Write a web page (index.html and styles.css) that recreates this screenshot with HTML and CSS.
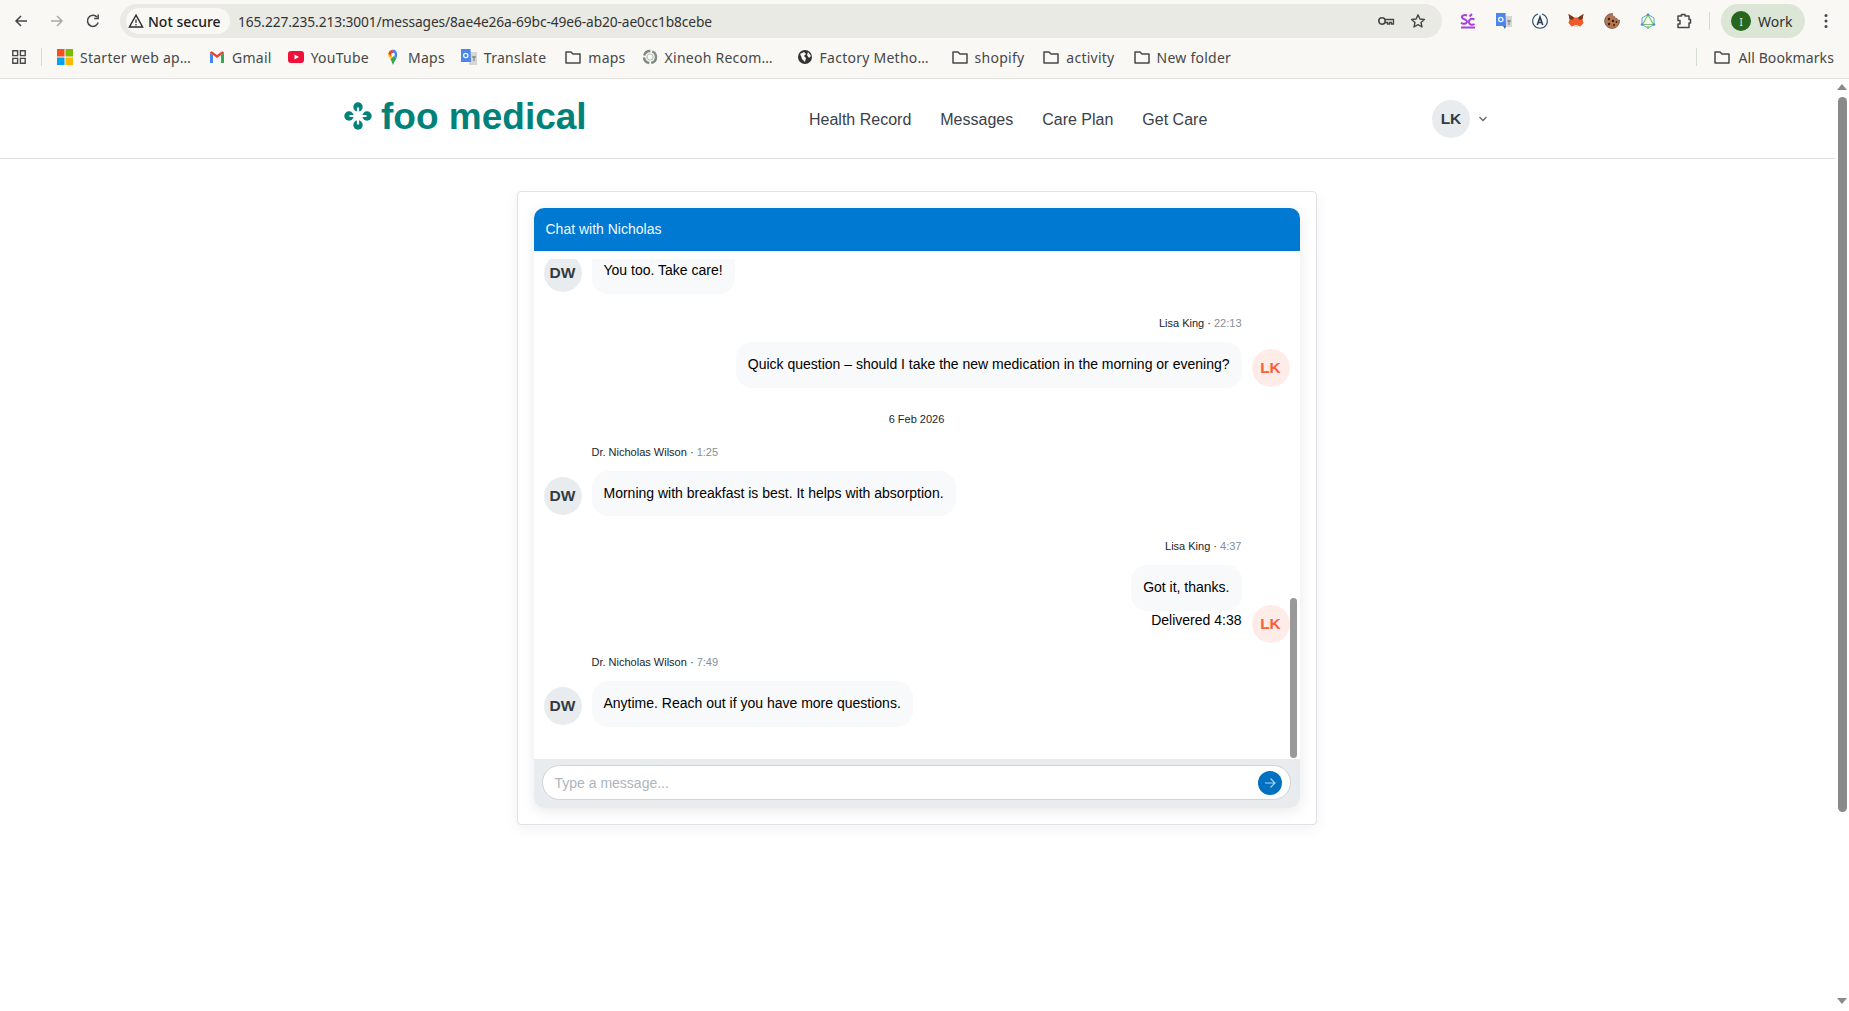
FILE: index.html
```html
<!DOCTYPE html>
<html lang="en">
<head>
<meta charset="utf-8">
<title>foo medical</title>
<link rel="stylesheet" href="styles.css">
</head>
<body>
<div class="browser">
  <div class="toolbar">
    <div class="nav-btns">
      <svg class="ico" viewBox="0 0 16 16"><path d="M14 8H3M8 3L3 8l5 5" fill="none" stroke="#474747" stroke-width="1.5"/></svg>
      <svg class="ico" viewBox="0 0 16 16"><path d="M2 8h11M8 3l5 5-5 5" fill="none" stroke="#a9a9a6" stroke-width="1.5"/></svg>
      <svg class="ico" viewBox="0 0 16 16"><path d="M13.2 9.6A5.5 5.5 0 1 1 12 4.1M13.2 1.5v4h-4" fill="none" stroke="#474747" stroke-width="1.5"/></svg>
    </div>
    <div class="omnibox">
      <div class="chip">
        <svg class="chip-ico" viewBox="0 0 16 16"><path d="M8 2.2L14.6 14H1.4z" fill="none" stroke="#2a2a2a" stroke-width="1.4"/><path d="M8 6.5v3.6M8 11v1.4" stroke="#2a2a2a" stroke-width="1.2"/></svg>
        <span>Not secure</span>
      </div>
      <span class="url">165.227.235.213:3001/messages/8ae4e26a-69bc-49e6-ab20-ae0cc1b8cebe</span>
      <svg class="omni-ico key" viewBox="0 0 18 16"><circle cx="5" cy="8" r="3.2" fill="none" stroke="#474747" stroke-width="1.6"/><path d="M8 6.500h8.500v4.500h-2V9.500h-2V11h-2V9.500H8" fill="none" stroke="#474747" stroke-width="1.300"/></svg>
      <svg class="omni-ico star" viewBox="0 0 16 16"><path d="M8 1.800l1.900 4.200 4.500.5-3.400 3 1 4.500L8 11.700 4 14l1-4.500-3.400-3 4.500-.5z" fill="none" stroke="#474747" stroke-width="1.400" stroke-linejoin="round"/></svg>
    </div>
    <div class="exts">
      <svg class="ext" viewBox="0 0 16 16"><path d="M7 2.500C4.500 1.500 1.500 2.500 2 4.600c.5 2 5 1.500 5 4 0 2.400-4 2.600-6 1.300M14.500 6.500C11 4.500 8.500 7 9 9.500c.5 2.500 3.500 2.800 5.500 1.500M1 14.500h14M9.500 3.500L12 1" fill="none" stroke="#a93fe0" stroke-width="2"/></svg>
      <svg class="ext" viewBox="0 0 16 16"><rect x="8" y="3" width="8" height="11" fill="#d5d7d5"/><path d="M0 0h9.500l.5 13H0z" fill="#4a86ec"/><path d="M7 13l2 3 1-3z" fill="#3565b8"/><circle cx="4.800" cy="6.500" r="2.200" fill="none" stroke="#fff" stroke-width="1.200"/><path d="M11 8h4M13 7v5" stroke="#77797a" stroke-width="1"/></svg>
      <svg class="ext" viewBox="0 0 16 16"><path d="M6 1A7.300 7.300 0 1 0 10 1" fill="none" stroke="#2b4a6b" stroke-width="1.100"/><path d="M5.300 12L8 4l2.700 8M6.300 9.500h3.400" fill="none" stroke="#23405f" stroke-width="1.600"/></svg>
      <svg class="ext" viewBox="0 0 16 16"><path d="M.5 1l5.500 3.500h4L15.500 1l-1 5 1 4-3 3.500-2-.5H5.500l-2 .5-3-3.500 1-4z" fill="#ee5c2b"/><path d="M.5 1L6 4.500 4.500 7 1.500 6zM15.500 1L10 4.500 11.500 7l3-1z" fill="#6e3b22"/><path d="M6 12h4v2H6z" fill="#d9d4cf"/></svg>
      <svg class="ext" viewBox="0 0 16 16"><path d="M8.500.500a7.500 7.500 0 1 0 7 6.500c-1.500.5-2.500-.5-2.500-1.500-1.500 0-2.800-.8-2.500-2-1.500 0-2.300-1.500-2-3z" fill="#b5754f" stroke="#5d3d2b" stroke-width=".6"/><circle cx="5" cy="6" r="1.200" fill="#2f2018"/><circle cx="9" cy="8" r="1.200" fill="#2f2018"/><circle cx="5" cy="11" r="1.200" fill="#2f2018"/><circle cx="10" cy="12" r="1" fill="#2f2018"/><circle cx="12.500" cy="9" r=".9" fill="#2f2018"/></svg>
      <svg class="ext" viewBox="0 0 16 16"><path d="M8 1.500l6 3.500v6.500L8 15l-6-3.500V5z" fill="none" stroke="#5aa9e0" stroke-width="1"/><path d="M8 2L2.500 11.500h11z" fill="none" stroke="#7bc26a" stroke-width="1.200"/><circle cx="8" cy="1.800" r="1.300" fill="#3f8ed6"/><circle cx="8" cy="14.500" r="1.300" fill="#7bc26a"/><circle cx="2" cy="11.500" r="1.200" fill="#3f8ed6"/><circle cx="14" cy="11.500" r="1.200" fill="#3f8ed6"/></svg>
      <svg class="ext" viewBox="0 0 16 16"><path d="M2 3h3.500V1.500h3.500V3H13v3.500h1.500V10H13v4.500H2V11h2V7.500H2z" fill="none" stroke="#474747" stroke-width="1.500" stroke-linejoin="round"/></svg>
    </div>
    <div class="vsep top-sep"></div>
    <div class="profile"><span class="profile-dot">I</span><span>Work</span></div>
    <svg class="menu" viewBox="0 0 4 16"><circle cx="2" cy="2.500" r="1.500"/><circle cx="2" cy="8" r="1.500"/><circle cx="2" cy="13.500" r="1.500"/></svg>
  </div>
  <div class="bookmarks">
    <svg class="apps" viewBox="0 0 14 14"><path d="M.8.800h4.800v4.800H.8zM8.400.800h4.800v4.800H8.400zM.8 8.400h4.800v4.800H.8zM8.400 8.400h4.800v4.800H8.400z" fill="none" stroke="#474747" stroke-width="1.400"/></svg>
    <div class="vsep bm-sep"></div>
    <div class="bm-list">
      <div class="bm"><svg class="bm-ico" viewBox="0 0 16 16"><path fill="#f25022" d="M0 0h7.500v7.500H0z"/><path fill="#7fba00" d="M8.500 0H16v7.500H8.500z"/><path fill="#00a4ef" d="M0 8.500h7.500V16H0z"/><path fill="#ffb900" d="M8.500 8.500H16V16H8.500z"/></svg><span class="trunc">Starter web ap…</span></div>
      <div class="bm"><svg class="bm-ico" viewBox="0 0 16 16"><path fill="#4285f4" d="M1 14V4l3 2v8z"/><path fill="#34a853" d="M12 14V6l3-2v10z"/><path fill="#ea4335" d="M1 4c0-1.500 1.500-2 2.500-1.300L8 6l4.500-3.300C13.500 2 15 2.500 15 4l-3 2-4 3-4-3z"/></svg><span>Gmail</span></div>
      <div class="bm"><svg class="bm-ico" viewBox="0 0 16 16"><rect y="2" width="16" height="12" rx="3" fill="#f0103a"/><path d="M6.500 5.500L11 8l-4.500 2.500z" fill="#fff"/></svg><span>YouTube</span></div>
      <div class="bm"><svg class="bm-ico" viewBox="0 0 16 16"><path fill="#34a853" d="M5.500 10l2.500 6c.8-2.500 2.500-4.500 3.300-6.500L9 7z"/><path fill="#fbbc04" d="M3.200 4.500C2.700 7 4.500 8.500 5.500 10L8 6.500z"/><path fill="#ea4335" d="M3.200 4.500L6 7l3-3.500L7.500 1 5 1.500z"/><path fill="#4285f4" d="M7.500.500c3.500-.5 6 4 3.800 9L9 7 8 4z"/><circle cx="8" cy="5.500" r="1.800" fill="#fff"/></svg><span>Maps</span></div>
      <div class="bm"><svg class="bm-ico" viewBox="0 0 16 16"><rect x="8" y="3" width="8" height="13" fill="#d5d7d5"/><path d="M0 0h9.500l.5 13H0z" fill="#4a86ec"/><circle cx="4.800" cy="6.500" r="2.200" fill="none" stroke="#fff" stroke-width="1.200"/><path d="M11 8h4M13 7v5" stroke="#77797a"/></svg><span>Translate</span></div>
      <div class="bm bm-wide"><svg class="bm-ico" viewBox="0 0 16 16"><use href="#folder"/></svg><span>maps</span></div>
      <div class="bm"><svg class="bm-ico" viewBox="0 0 16 16"><circle cx="8" cy="8" r="6" fill="none" stroke="#7c8a80" stroke-width="2.400" stroke-dasharray="8 2"/><circle cx="8" cy="8" r="3" fill="none" stroke="#b9c2bb" stroke-width="1.200"/></svg><span class="trunc">Xineoh Recom…</span></div>
      <div class="bm bm-wide"><svg class="bm-ico" viewBox="0 0 16 16"><circle cx="8" cy="8" r="7" fill="#333"/><path d="M3 5l4-2 2 2-2 2 2 2-1 4-3-3-1-3zM11 3l3 4-2 2-2-3z" fill="#f9f8f5"/></svg><span class="trunc">Factory Metho…</span></div>
      <div class="bm bm-wide"><svg class="bm-ico" viewBox="0 0 16 16"><use href="#folder"/></svg><span>shopify</span></div>
      <div class="bm bm-wide"><svg class="bm-ico" viewBox="0 0 16 16"><use href="#folder"/></svg><span>activity</span></div>
      <div class="bm bm-wide"><svg class="bm-ico" viewBox="0 0 16 16"><use href="#folder"/></svg><span>New folder</span></div>
    </div>
    <div class="vsep"></div>
    <div class="bm bm-all"><svg class="bm-ico" viewBox="0 0 16 16"><use href="#folder"/></svg><span>All Bookmarks</span></div>
  </div>
</div>

<svg class="defs" aria-hidden="true"><defs><path id="folder" d="M1 3h5l2 2h7v9H1z" fill="none" stroke="#474747" stroke-width="1.500" stroke-linejoin="round"/></defs></svg>

<div class="viewport">
  <div class="page">
    <header class="site-header">
      <div class="header-inner">
        <a class="logo">
          <svg class="logo-mark" viewBox="0 0 28 28"><g fill="#00827a"><circle cx="14" cy="5" r="4.700"/><circle cx="14" cy="23" r="4.700"/><circle cx="5" cy="14" r="4.700"/><circle cx="23" cy="14" r="4.700"/></g><g stroke="#fff" stroke-width="2.200"><path d="M14 5.500v5M14 22.500v-5M5.500 14h5M22.500 14h-5"/></g></svg>
          <span class="logo-text">foo medical</span>
        </a>
        <nav class="main-nav">
          <a>Health Record</a><a>Messages</a><a>Care Plan</a><a>Get Care</a>
        </nav>
        <div class="user">
          <div class="avatar">LK</div>
          <svg class="chev" viewBox="0 0 10 6"><path d="M1.500 1L5 4.500 8.500 1" fill="none" stroke="#666" stroke-width="1.300"/></svg>
        </div>
      </div>
    </header>

    <main class="content">
      <section class="card">
        <div class="chat">
          <div class="chat-title">Chat with Nicholas</div>
          <div class="scroller">
            <div class="thread">
              <div class="msg first">
                <div class="avatar">DW</div>
                <div class="msg-body"><div class="bubble">You too. Take care!</div></div>
              </div>
              <div class="msg mine second">
                <div class="msg-body">
                  <div class="meta">Lisa King · <span class="time">22:13</span></div>
                  <div class="bubble">Quick question – should I take the new medication in the morning or evening?</div>
                </div>
                <div class="avatar me">LK</div>
              </div>
              <div class="date">6 Feb 2026</div>
              <div class="msg after-date">
                <div class="avatar">DW</div>
                <div class="msg-body">
                  <div class="meta">Dr. Nicholas Wilson · <span class="time">1:25</span></div>
                  <div class="bubble">Morning with breakfast is best. It helps with absorption.</div>
                </div>
              </div>
              <div class="msg mine delivered">
                <div class="msg-body">
                  <div class="meta">Lisa King · <span class="time">4:37</span></div>
                  <div class="bubble">Got it, thanks.</div>
                  <div class="status">Delivered 4:38</div>
                </div>
                <div class="avatar me">LK</div>
              </div>
              <div class="msg last">
                <div class="avatar">DW</div>
                <div class="msg-body">
                  <div class="meta">Dr. Nicholas Wilson · <span class="time">7:49</span></div>
                  <div class="bubble">Anytime. Reach out if you have more questions.</div>
                </div>
              </div>
            </div>
            <div class="thumb"></div>
          </div>
          <div class="composer">
            <div class="field">
              <span class="placeholder">Type a message...</span>
              <button class="send" type="button" aria-label="Send"><svg viewBox="0 0 14 14"><path d="M2 7h10M7.500 2.500L12 7l-4.500 4.500" fill="none" stroke="#a9d2f2" stroke-width="1.200"/></svg></button>
            </div>
          </div>
        </div>
      </section>
    </main>
  </div>
  <div class="page-scrollbar">
    <svg class="sb-arrow" viewBox="0 0 10 6"><path d="M5 0l5 6H0z" fill="#8a8a8a"/></svg>
    <div class="page-thumb"></div>
    <svg class="sb-arrow" viewBox="0 0 10 6"><path d="M5 6L0 0h10z" fill="#8a8a8a"/></svg>
  </div>
</div>
</body>
</html>
```
FILE: styles.css
```css
* { box-sizing: border-box; }
html, body { margin: 0; height: 100%; overflow: hidden; }
body { display: flex; flex-direction: column; background: #fff; font-family: "Liberation Sans", Arial, sans-serif; color: #000; }
.defs { position: absolute; width: 0; height: 0; }

/* browser chrome */
.browser { flex: none; height: 79px; background: #f9f8f5; border-bottom: 1px solid #e2e1dd; font-family: "Noto Sans", sans-serif; color: #3e3e3e; }
.toolbar { height: 42px; display: flex; align-items: center; }
.nav-btns { display: flex; gap: 20px; padding-left: 13px; width: 120px; flex: none; }
.ico { width: 16px; height: 16px; }
.omnibox { width: 1322px; height: 34px; border-radius: 17px; background: #e9eae4; display: flex; align-items: center; padding: 0 16px 0 6px; flex: none; }
.chip { height: 26px; width: 104px; border-radius: 13px; background: #f9f8f5; display: flex; align-items: center; gap: 4px; padding-left: 2px; font-size: 14px; font-weight: 500; color: #222; flex: none; }
.chip-ico { width: 16px; height: 16px; }
.url { margin-left: 8px; font-size: 13.75px; color: #333; letter-spacing: -0.1px; flex: 1; }
.omni-ico { width: 16px; height: 16px; flex: none; }
.omni-ico.key { width: 18px; height: 16px; }
.omni-ico.star { margin-left: 15px; }
.exts { display: flex; gap: 20px; padding-left: 18px; }
.ext { width: 16px; height: 16px; flex: none; }
.vsep { width: 1px; height: 18px; background: #d4dccf; flex: none; }
.top-sep { margin: 0 11px 0 17px; }
.profile { width: 84px; height: 34px; border-radius: 17px; background: #dce6d6; display: flex; align-items: center; gap: 7px; padding-left: 10px; font-size: 14px; color: #2f2f2f; flex: none; }
.profile-dot { width: 20px; height: 20px; border-radius: 50%; background: #27661f; color: #d7e6d2; font-size: 11px; display: flex; align-items: center; justify-content: center; }
.menu { width: 4px; height: 16px; margin-left: 19px; fill: #474747; flex: none; }

.bookmarks { height: 30px; display: flex; align-items: center; padding: 0 15px 0 12px; font-size: 14px; letter-spacing: 0.25px; color: #474747; }
.apps { width: 14px; height: 14px; flex: none; }
.bm-sep { margin: 0 15px; }
.bm-list { flex: 1; display: flex; gap: 16px; }
.bm { display: flex; align-items: center; gap: 7px; white-space: nowrap; }
.bm-wide { margin-left: 3px; }
.trunc { width: 113px; }
.bm-ico { width: 16px; height: 16px; flex: none; }
.bm-all { margin-left: 17px; gap: 8px; letter-spacing: 0.1px; }

/* page */
.viewport { flex: 1; min-height: 0; display: flex; }
.page { flex: 1; min-width: 0; }
.page-scrollbar { width: 14px; flex: none; display: flex; flex-direction: column; align-items: center; padding: 5px 0 3px; gap: 4px; background: #fff; }
.sb-arrow { width: 10px; height: 6px; flex: none; }
.page-thumb { width: 9px; height: 715px; border-radius: 5px; background: #8a8a8a; margin: 3px 0 182px; }

.site-header { height: 80px; border-bottom: 1px solid #dee2e6; }
.header-inner { height: 79px; display: flex; align-items: center; padding-left: 344px; }
.logo { display: flex; align-items: center; gap: 9px; width: 465px; margin-top: -4px; }
.logo-mark { width: 28px; height: 28px; flex: none; margin-bottom: 2px; }
.logo-text { font-size: 37px; font-weight: 700; color: #00827a; line-height: 1; }
.main-nav { display: flex; gap: 29px; font-size: 16px; color: #3a4149; width: 623px; margin-top: 2px; }
.user { display: flex; align-items: center; gap: 8px; margin-top: 1px; }
.chev { width: 10px; height: 6px; }

.avatar { width: 38px; height: 38px; border-radius: 50%; background: #e9ecef; color: #343a40; font-weight: 700; font-size: 15.5px; display: flex; align-items: center; justify-content: center; flex: none; }
.avatar.me { background: #feece8; color: #fa5f33; }

.content { display: flex; justify-content: center; padding: 32px 2px 0 0; }
.card { width: 800px; height: 634px; padding: 16px; background: #fff; border: 1px solid #dee2e6; border-radius: 4px; box-shadow: 0 4px 14px rgba(0,0,0,.06); }
.chat { height: 100%; display: flex; flex-direction: column; border-radius: 10px; box-shadow: 0 3px 14px rgba(0,0,0,.09); }
.chat-title { flex: none; height: 43px; padding: 0 12px 2px; background: #0079d3; color: #f1f8fd; font-size: 14px; display: flex; align-items: center; border-radius: 10px 10px 0 0; }
.scroller { flex: 1; min-height: 0; margin-top: 8px; overflow: hidden; position: relative; background: #fff; }
.thread { padding: 0 10px; }
.msg { display: flex; align-items: flex-end; gap: 10px; margin-top: 22px; }
.msg > .avatar { margin-bottom: 1px; }
.msg.first { margin-top: -5px; }
.msg.first > .avatar { margin-bottom: 2px; }
.msg.second { margin-top: 21px; }
.msg.last { margin-top: 24px; }
.msg.last > .avatar { margin-bottom: 2px; }
.msg.mine { justify-content: flex-end; }
.msg.after-date { margin-top: 16px; }
.msg.delivered > .avatar { margin-bottom: -13px; }
.msg-body { display: flex; flex-direction: column; align-items: flex-start; }
.mine .msg-body { align-items: flex-end; }
.meta { font-size: 11px; line-height: 17px; margin-bottom: 10px; color: #212529; }
.time { color: #868e96; }
.bubble { font-size: 14px; line-height: 21.7px; padding: 12px; background: #f8f9fa; border-radius: 16px; color: #000; }
.first .bubble { padding-top: 5px; border-radius: 0 0 16px 16px; }
.status { font-size: 14px; line-height: 19px; color: #000; }
.date { text-align: center; font-size: 11px; line-height: 17px; margin-top: 23px; color: #212529; }
.thumb { position: absolute; top: 339px; right: 3px; width: 7px; height: 160px; border-radius: 4px; background: #999; }

.composer { flex: none; height: 49px; background: #e9ecef; padding: 6px 9px 8px 8px; border-radius: 0 0 10px 10px; }
.field { height: 35px; border: 1px solid #ced4da; border-radius: 18px; background: #fff; display: flex; align-items: center; justify-content: space-between; padding: 0 8px 0 12px; }
.placeholder { font-size: 14px; color: #adb5bd; }
.send { width: 24px; height: 24px; border: 0; border-radius: 50%; padding: 5px; background: #0070c0; display: flex; }
.send svg { width: 14px; height: 14px; }
```
